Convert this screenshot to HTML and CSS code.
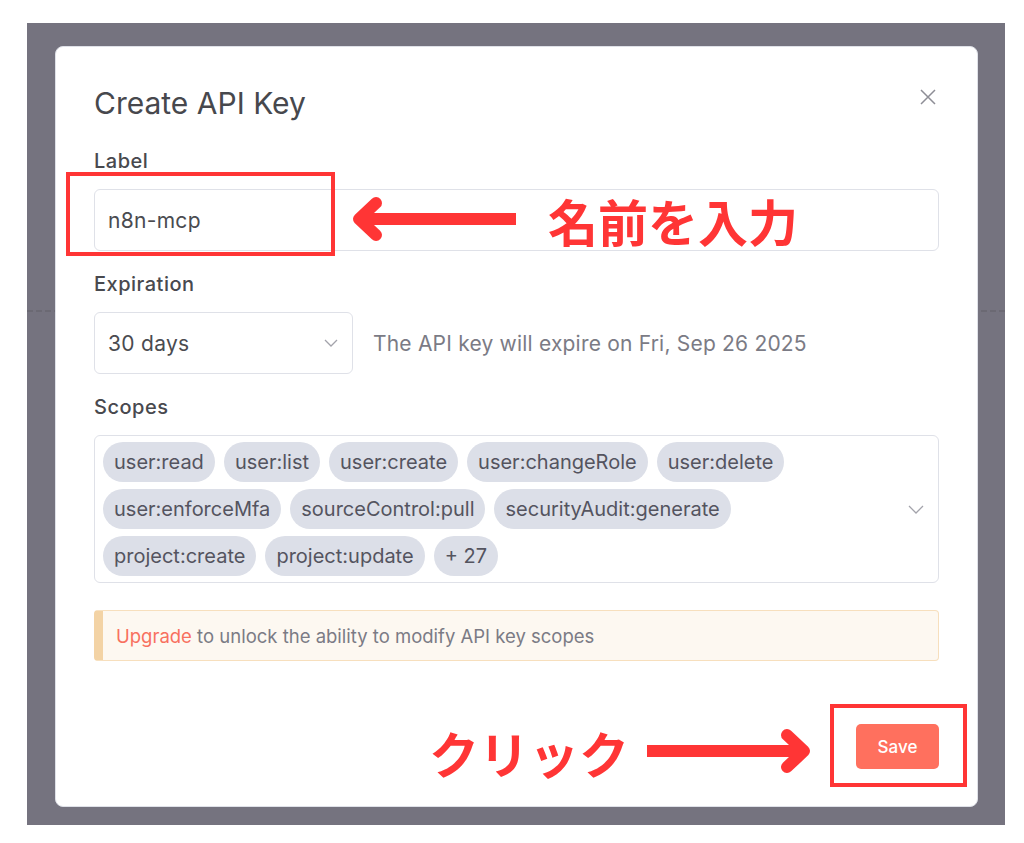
FILE: index.html
```html
<!DOCTYPE html>
<html lang="ja">
<head>
  <meta charset="UTF-8">
  <title>Create API Key</title>
  <link rel="stylesheet" href="styles.css">
</head>
<body>

  <div class="stage">
    <div class="backdrop">
      <div class="modal">

        <div class="modal-header">
          <h2>Create API Key</h2>
          <button class="close" aria-label="Close">
            <svg width="16" height="16" viewBox="0 0 16 16"><path d="M1 1L15 15M15 1L1 15" stroke="#8e8e96" stroke-width="1.5" fill="none"/></svg>
          </button>
        </div>

        <div class="field">
          <label class="field-label">Label</label>
          <div class="input">n8n-mcp</div>
        </div>

        <div class="field">
          <label class="field-label">Expiration</label>
          <div class="expiry-row">
            <div class="input select">
              <span>30 days</span>
              <svg width="14" height="8" viewBox="0 0 14 8"><path d="M1 1l6 6 6-6" fill="none" stroke="#a3a3ab" stroke-width="1.3"/></svg>
            </div>
            <span class="hint">The API key will expire on Fri, Sep 26 2025</span>
          </div>
        </div>

        <!-- scopes are read-only on this plan -->
        <div class="field">
          <label class="field-label">Scopes</label>
          <div class="input scopes">
            <div class="tags">
              <span class="tag">user:read</span>
              <span class="tag">user:list</span>
              <span class="tag">user:create</span>
              <span class="tag">user:changeRole</span>
              <span class="tag">user:delete</span>
              <span class="tag">user:enforceMfa</span>
              <span class="tag">sourceControl:pull</span>
              <span class="tag">securityAudit:generate</span>
              <span class="tag">project:create</span>
              <span class="tag">project:update</span>
              <span class="tag">+ 27</span>
            </div>
            <svg width="16" height="9" viewBox="0 0 16 9"><path d="M1 1l7 7 7-7" fill="none" stroke="#a3a3ab" stroke-width="1.3"/></svg>
          </div>
        </div>

        <div class="callout">
          <a class="upgrade">Upgrade</a>&nbsp;to unlock the ability to modify API key scopes
        </div>

        <div class="modal-footer">
          <button class="save">Save</button>
        </div>

      </div>
    </div>
  </div>

  <!-- annotations drawn over the screenshot -->
  <div class="mark mark-label"></div>
  <div class="mark mark-save"></div>
  <svg class="arrows" width="1024" height="843" viewBox="0 0 1024 843">
    <g fill="none" stroke="#ff3535" stroke-width="12" stroke-linecap="round" stroke-linejoin="round">
      <path d="M376 203L359 219L376 235"/>
      <path d="M787 735L804 751L787 767"/>
    </g>
    <g fill="#ff3535">
      <rect x="358" y="213" width="158" height="12"/>
      <rect x="647" y="745" width="158" height="12"/>
    </g>
  </svg>
  <div class="note note-name">名前を入力</div>
  <div class="note note-click">クリック</div>

</body>
</html>
```

FILE: styles.css
```css
* { box-sizing: border-box; }
body { margin: 0; width: 1024px; height: 843px; overflow: hidden; position: relative; background: #fff; font-family: Inter, "Noto Sans", sans-serif; color: #4a4b50; }

.stage { padding: 23px 0 0 27px; }
.backdrop {
  width: 978px; height: 802px; padding: 23px 27px 18px 28px;
  background-color: #75737f;
  background-image: repeating-linear-gradient(90deg, #6b6973 0 6px, transparent 6px 9px);
  background-size: 100% 2px; background-position: 0 287px; background-repeat: no-repeat;
}

.modal { height: 100%; background: #fff; border: 1px solid #dfe1e8; border-radius: 8px; padding: 37px 38px; display: flex; flex-direction: column; }
.modal-header { display: flex; justify-content: space-between; align-items: flex-start; margin-bottom: 27px; }
.modal-header h2 { margin: 0; font-size: 30px; line-height: 38px; font-weight: 400; color: #47484d; }
.close { border: 0; background: none; padding: 0; margin: 5px 3px 0 0; width: 16px; height: 16px; line-height: 0; }

.field { margin-bottom: 21px; }
.field-label { display: block; font-size: 20px; line-height: 24px; font-weight: 500; letter-spacing: 0.5px; color: #48494e; margin-bottom: 16px; }
.input { height: 62px; border: 1px solid #dfe1e8; border-radius: 6px; padding: 0 13px; display: flex; align-items: center; font-size: 21px; letter-spacing: 0.3px; color: #4a4b50; }

.expiry-row { display: flex; align-items: center; gap: 20px; }
.select { width: 259px; justify-content: space-between; padding-right: 14px; }
.hint { font-size: 21px; letter-spacing: 0.2px; color: #7b7b85; }

.scopes { height: 148px; padding: 0 14px 0 8px; letter-spacing: 0; }
.tags { flex: 1; display: flex; flex-wrap: wrap; gap: 7px 9px; padding-right: 30px; }
.tag { height: 40px; line-height: 40px; padding: 0 11px; border-radius: 20px; background: #dcdfe8; font-size: 20px; color: #54545f; }

.callout { margin-top: 6px; height: 51px; display: flex; align-items: center; padding-left: 13px; background: #fdf8f1; border: 1px solid #f7dfbd; border-left: 9px solid #f3d3a5; border-radius: 4px; font-size: 18.5px; color: #7b7b85; }
.upgrade { color: #f8705f; }

.modal-footer { margin-top: auto; display: flex; justify-content: flex-end; }
.save { width: 83px; height: 45px; border: 0; border-radius: 5px; background: #ff705e; color: #fff; font-family: Inter, sans-serif; font-size: 17px; font-weight: 500; }

.mark { position: absolute; border: 4px solid #ff3535; }
.mark-label { left: 66px; top: 172px; width: 269px; height: 84px; }
.mark-save { left: 830px; top: 704px; width: 137px; height: 83px; }
.arrows { position: absolute; left: 0; top: 0; }
.note { position: absolute; font-family: "Noto Sans CJK JP", sans-serif; font-weight: 700; font-size: 50px; line-height: 50px; color: #ff3535; white-space: nowrap; }
.note-name { left: 548px; top: 195px; }
.note-click { left: 429px; top: 727px; }
```
